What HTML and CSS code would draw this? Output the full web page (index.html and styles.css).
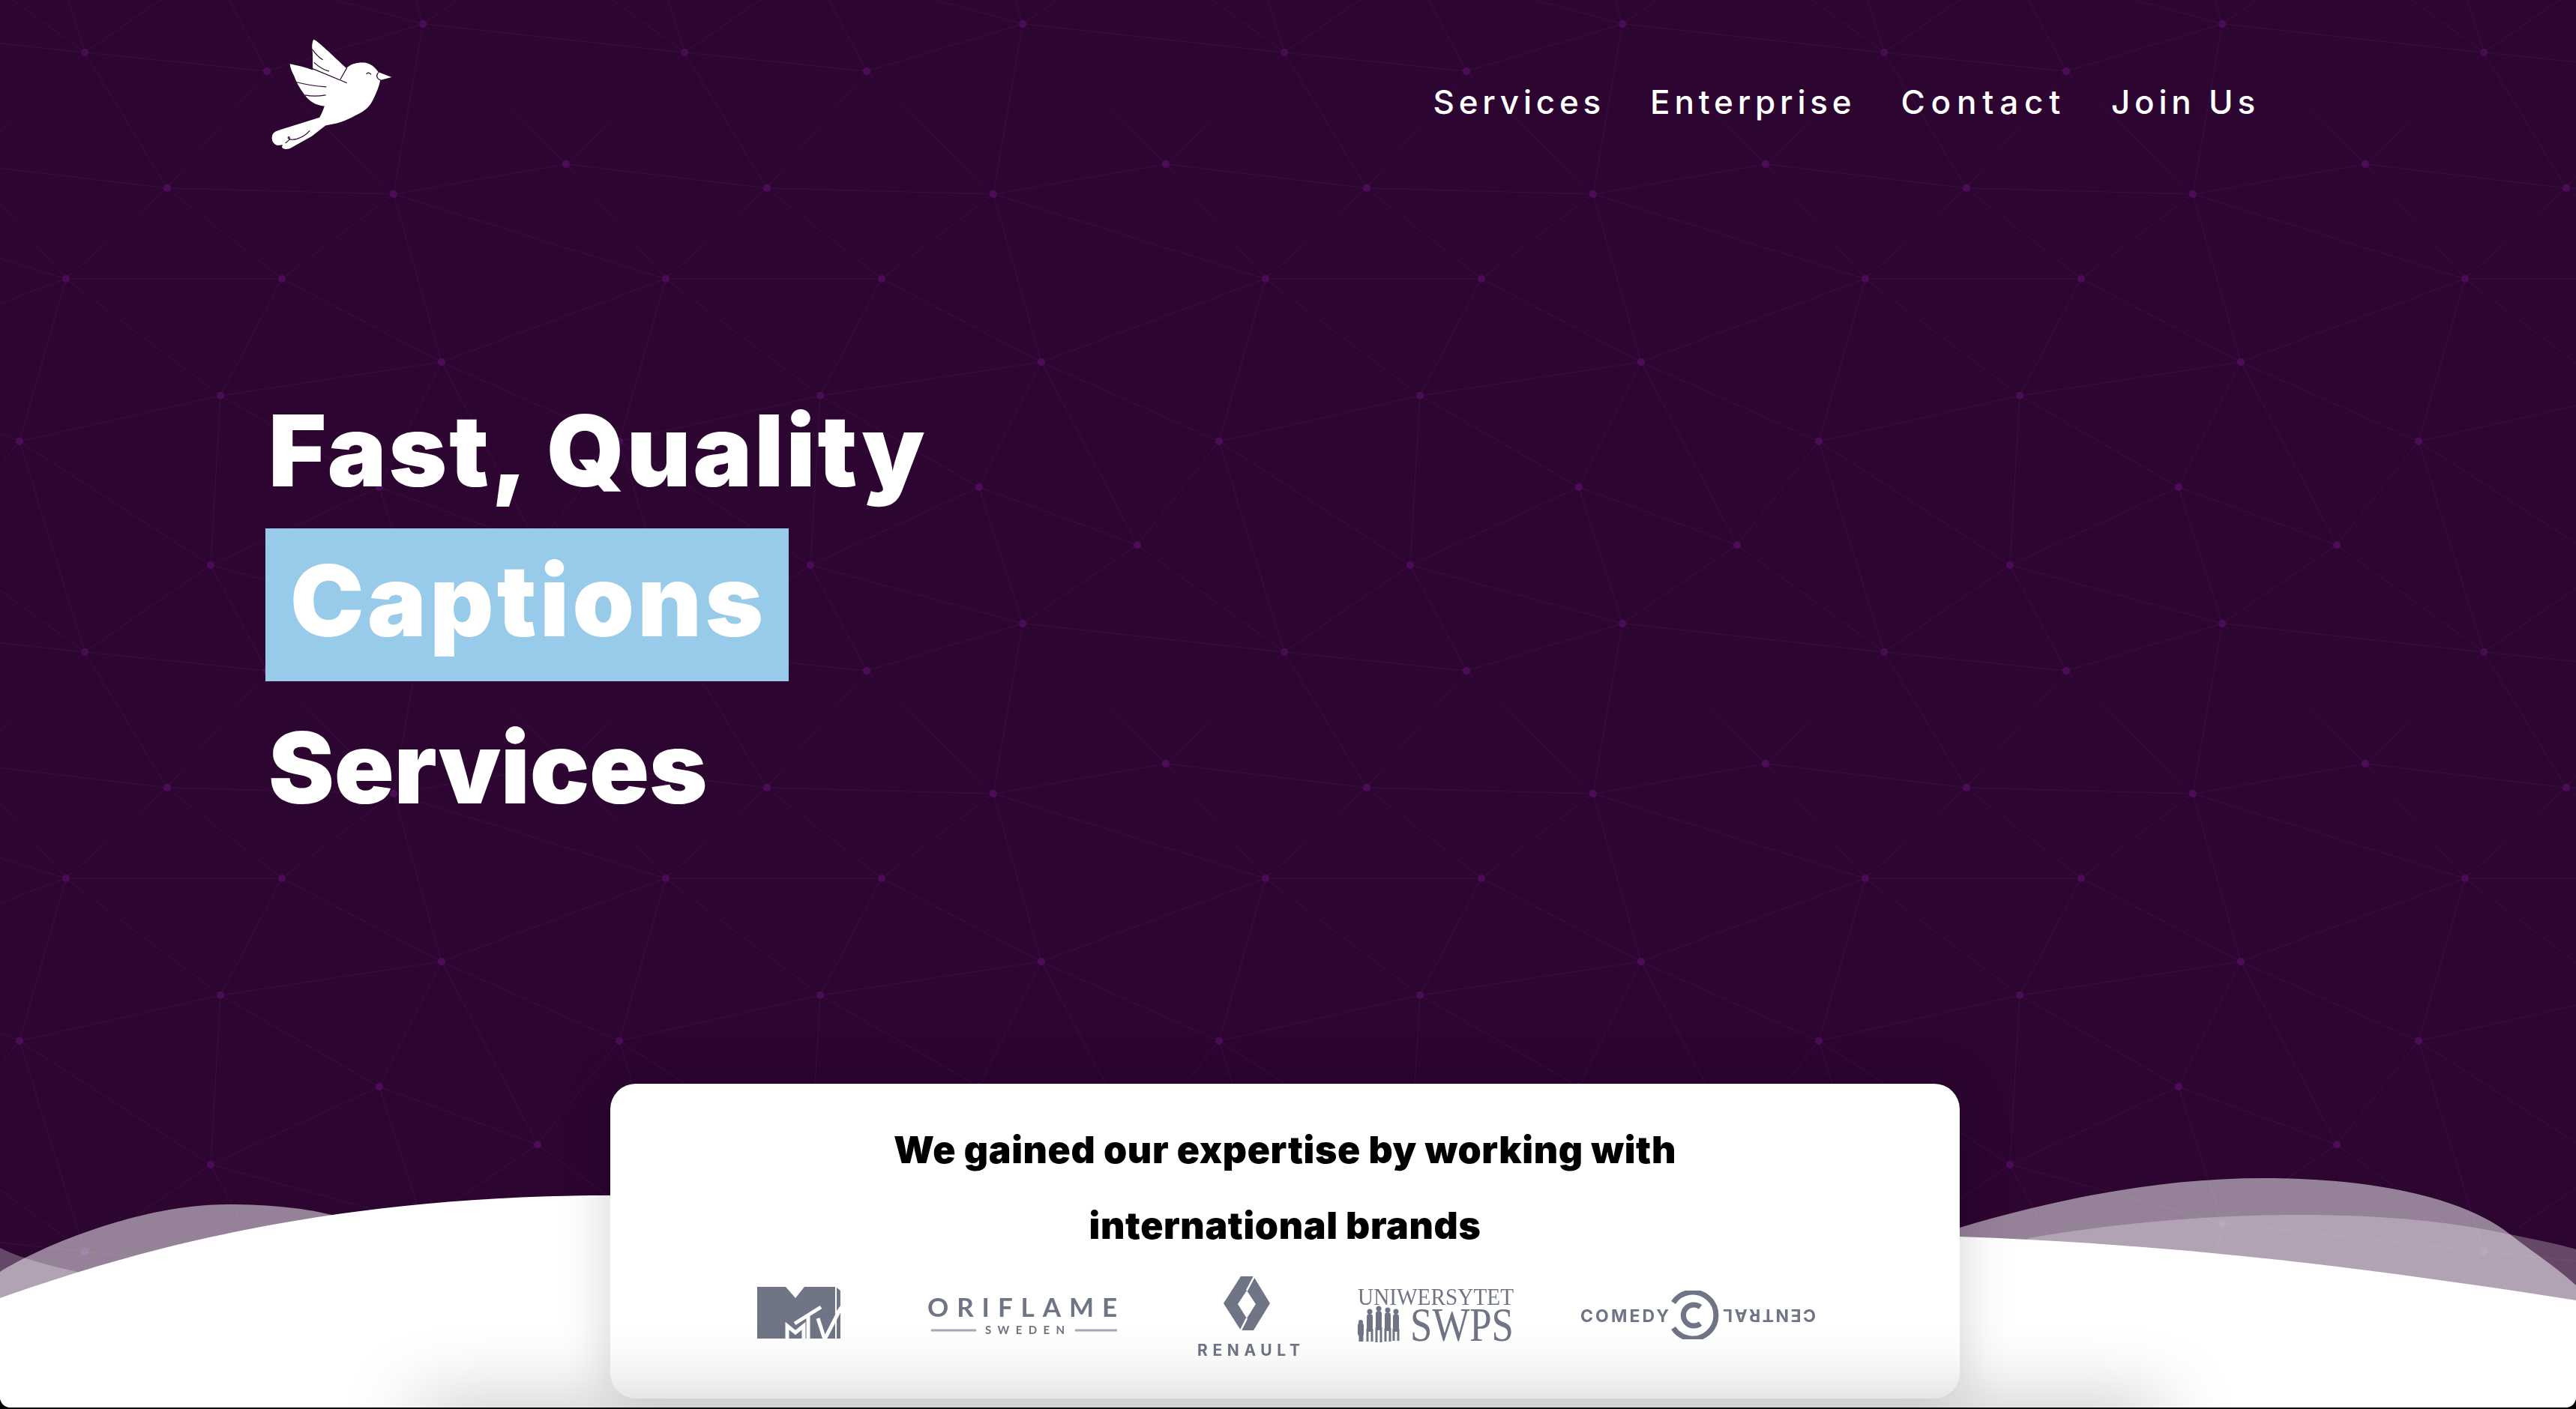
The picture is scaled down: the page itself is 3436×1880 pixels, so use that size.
FILE: index.html
```html
<!DOCTYPE html>
<html lang="en">
<head>
<meta charset="utf-8">
<title>Fast, Quality Captions Services</title>
<link rel="stylesheet" href="styles.css">
</head>
<body>
<div class="page">
  <svg class="net" aria-hidden="true">
    <defs>
      <g id="mesh">
        <path class="net-line" d="M88 372L376 372M88 372L294 528M88 372L26 589M88 372L223 251M376 372L294 528M376 372L589 483M376 372L223 251M376 372L525 259M294 528L589 483M294 528L26 589M294 528L506 650M294 528L281 754M589 483L506 650M589 483L717 727M589 483L525 259M26 589L281 754M506 650L717 727M506 650L281 754M356 95L564 32M356 95L525 259M356 95L113 70M356 95L223 251M564 32L525 259M564 32L755 219M525 259L755 219M525 259L223 251M113 70L223 251M589 483L888 372M589 483L826 589M717 727L826 589M717 727L913 870M564 32L913 70M281 754L564 832M506 650L564 832M717 727L564 832M281 754L113 870M281 754L356 895M755 219L913 70M755 219L1023 251M755 219L888 372M525 259L888 372M26 589L113 870"/>
        <g class="net-dot">
          <circle cx="88" cy="372" r="5"/><circle cx="376" cy="372" r="5"/><circle cx="294" cy="528" r="5"/>
          <circle cx="589" cy="483" r="5"/><circle cx="26" cy="589" r="5"/><circle cx="506" cy="650" r="5"/>
          <circle cx="717" cy="727" r="5"/><circle cx="281" cy="754" r="5"/><circle cx="356" cy="95" r="5"/>
          <circle cx="564" cy="32" r="5"/><circle cx="525" cy="259" r="5"/><circle cx="113" cy="70" r="5"/>
          <circle cx="755" cy="219" r="5"/><circle cx="223" cy="251" r="5"/>
        </g>
      </g>
      <pattern id="tile" width="800" height="800" patternUnits="userSpaceOnUse">
        <use href="#mesh"/>
        <use href="#mesh" x="-800"/>
        <use href="#mesh" y="-800"/>
        <use href="#mesh" x="-800" y="-800"/>
      </pattern>
    </defs>
    <rect width="100%" height="100%" fill="url(#tile)"/>
  </svg>

  <svg class="waves" viewBox="0 1500 3436 380" aria-hidden="true">
    <path class="wave-back" d="M0 1697C60 1660 190 1607 304 1607C360 1607 410 1612 450 1623L700 1720H2500C2530 1670 2580 1655 2614 1638C2760 1595 2890 1572 3019 1572C3170 1572 3290 1600 3348 1647C3385 1675 3415 1695 3436 1715V1880H0Z"/>
    <path class="wave-mid" d="M0 1665C30 1680 70 1690 113 1699L400 1760H2600L2706 1652C2820 1632 2950 1621 3067 1621C3180 1621 3270 1630 3348 1647C3380 1654 3415 1660 3436 1667V1880H0Z"/>
    <path class="wave-front" d="M0 1732C160 1676 420 1595 814 1595H1500C2000 1595 2300 1650 2614 1650C2900 1660 3150 1690 3436 1735V1880H0Z"/>
  </svg>

  <header class="topbar">
    <svg class="bird" viewBox="180 150 490 455" role="img" aria-label="Logo">
      <path class="bird-body" d="M352 157C372 165 400 195 484 272C500 255 530 248 555 250C580 252 600 270 612 288L665 308L620 320C615 345 605 370 590 400C575 430 555 445 520 462C480 485 440 497 400 502L345 545L262 592C250 598 235 600 225 590L228 580L208 582C190 578 182 560 186 545C188 530 200 525 215 520L376 470C385 455 390 440 396 424C370 422 345 412 325 390C305 365 285 335 275 305C265 285 258 270 257 255C290 262 320 268 350 280C347 260 350 240 348 210C345 190 345 170 352 157Z"/>
      <path class="bird-ink" d="M350 275L485 331M346 196C360 215 372 228 388 238M355 250C372 266 390 278 413 284M283 328C320 338 360 345 402 347M318 380C345 386 372 385 400 380M485 272L460 316M565 295Q572 285 582 297M612 290C602 298 604 314 620 320M240 572L252 562C262 556 254 542 250 550C248 560 270 560 285 556C305 550 322 540 336 524"/>
    </svg>
    <nav class="menu">
      <a class="menu-link" href="#">Services</a>
      <a class="menu-link" href="#">Enterprise</a>
      <a class="menu-link menu-link-wide" href="#">Contact</a>
      <a class="menu-link" href="#">Join Us</a>
    </nav>
  </header>

  <h1 class="headline">
    <span class="headline-line">Fast, Quality</span>
    <span class="headline-line headline-mark"><span class="mark">Captions</span></span>
    <span class="headline-line headline-last">Services</span>
  </h1>

  <section class="card">
    <h2 class="card-title">We gained our expertise by working with<br>international brands</h2>
    <div class="logos">
      <svg class="logo logo-mtv" viewBox="0 0 111 69" role="img" aria-label="MTV">
        <path class="logo-fill" d="M0 0H38L51 15L63 0H104V69H0ZM106 1L111 5V25L106 32ZM106 40L111 35V69H106Z"/>
        <path class="logo-cut" d="M50 49L85 27M68 38V69M81 42L90 70L108 35M40 69V52L51 61L62 52V69"/>
      </svg>
      <svg class="logo logo-ori" viewBox="0 -8 253 72" role="img" aria-label="Oriflame Sweden">
        <text class="logo-text ori-name" x="0" y="28" textLength="253">ORIFLAME</text>
        <path class="logo-rule" d="M5 46H65M197 46H253"/>
        <text class="logo-text ori-sub" x="77" y="51" textLength="106">SWEDEN</text>
      </svg>
      <svg class="logo logo-ren" viewBox="0 0 137 116" role="img" aria-label="Renault">
        <path class="logo-fill logo-even" d="M58 0H75L97 36L75 72H58L35 36ZM66 19L54 37L66 56L78 37Z"/>
        <path class="logo-slash" d="M76 0L66 19M66 56L58 72"/>
        <text class="logo-bold ren-name" x="0" y="106" textLength="137">RENAULT</text>
      </svg>
      <svg class="logo logo-swps" viewBox="0 -12 208 100" role="img" aria-label="Uniwersytet SWPS">
        <text class="logo-serif swps-top" x="0" y="22" textLength="208" lengthAdjust="spacingAndGlyphs">UNIWERSYTET</text>
        <text class="logo-serif swps-big" x="70" y="70" textLength="138" lengthAdjust="spacingAndGlyphs">SWPS</text>
        <g class="logo-fill">
          <circle cx="4" cy="45" r="3"/><path class="logo-person" d="M4 50V60"/><path class="logo-leg" d="M3 60V71M6 60V71"/>
          <circle cx="16" cy="31" r="3.5"/><path class="logo-person" d="M16 38V54"/><path class="logo-leg" d="M13 54V71M19 54V71"/>
          <circle cx="28" cy="27" r="3.5"/><path class="logo-person" d="M28 34V52"/><path class="logo-leg" d="M25 52V72M31 52V72"/>
          <circle cx="40" cy="29" r="3.5"/><path class="logo-person" d="M40 36V53"/><path class="logo-leg" d="M37 53V71M43 53V71"/>
          <circle cx="51" cy="31" r="3.5"/><path class="logo-person" d="M51 38V54"/><path class="logo-leg" d="M48 54V70M54 54V70"/>
        </g>
      </svg>
      <svg class="logo logo-cc" viewBox="0 0 314 65" role="img" aria-label="Comedy Central">
        <text class="logo-bold cc-name" x="0" y="42" textLength="118">COMEDY</text>
        <path class="logo-ring" d="M124 16A31 31 0 1 1 124 50"/>
        <path class="logo-ring logo-ring-in" d="M160 22A14 14 0 1 0 160 44"/>
        <text class="logo-bold cc-name" x="190" y="41" textLength="124" transform="rotate(180 252 33)">CENTRAL</text>
      </svg>
    </div>
  </section>

  <div class="floor-shadow"></div>
</div>
</body>
</html>
```
FILE: styles.css
```css
* { box-sizing: border-box; }
html, body { margin: 0; height: 100%; }
body { background: #000; overflow: hidden; font-family: "Inter", "Liberation Sans", sans-serif; }

.page {
  position: relative;
  width: 3436px;
  height: 1878px;
  background: #2c0530;
  border-radius: 0 0 14px 14px;
  overflow: hidden;
  display: flex;
  flex-direction: column;
  padding-left: 361px;
}

.net { position: absolute; inset: 0; width: 100%; height: 100%; }
.net-line { fill: none; stroke: #3a0b43; stroke-width: 1; }
.net-dot { fill: #4d0c5a; }

.waves { position: absolute; left: 0; top: 1500px; width: 3436px; height: 380px; }
.wave-back { fill: #fff; fill-opacity: .5; }
.wave-mid { fill: #fff; fill-opacity: .27; }
.wave-front { fill: #fff; }

.topbar {
  position: relative;
  display: flex;
  justify-content: space-between;
  align-items: flex-start;
  width: 2653px;
  padding-top: 50px;
}
.bird { display: block; width: 163px; height: 152px; }
.bird-body { fill: #fff; }
.bird-ink { fill: none; stroke: #2c0530; stroke-width: 3.5; stroke-linecap: round; }

.menu { display: flex; gap: 60px; padding-top: 56px; }
.menu-link {
  color: #fff;
  font-size: 44px;
  line-height: 60px;
  font-weight: 500;
  letter-spacing: 5.8px;
  text-decoration: none;
}
.menu-link-wide { letter-spacing: 7.8px; }

.headline {
  position: relative;
  margin: 297px 0 0 -7px;
  color: #fff;
  font-size: 132px;
  font-weight: 900;
  letter-spacing: 3px;
}
.headline-line { display: block; line-height: 204px; padding-left: 4px; }
.headline-mark { padding-left: 0; margin-top: -4px; letter-spacing: 4.4px; }
.headline-last { margin-top: 13px; letter-spacing: -.2px; }
.mark {
  display: inline-block;
  height: 204px;
  line-height: 192px;
  padding: 0 30px 0 33px;
  background: #98cbe9;
}

.card {
  position: absolute;
  left: 814px;
  top: 1446px;
  width: 1800px;
  height: 420px;
  border-radius: 34px;
  background: #fff;
  box-shadow: 0 0 70px rgba(0, 0, 0, .18);
  padding-top: 38px;
}
.card-title {
  margin: 0;
  color: #000;
  font-size: 50px;
  line-height: 101px;
  font-weight: 900;
  text-align: center;
  letter-spacing: .6px;
}
.logos { display: flex; align-items: flex-start; height: 115px; margin-top: 17px; padding-left: 196px; }
.logo { display: block; flex: none; filter: blur(.7px); }
.logo-mtv { width: 111px; height: 69px; margin-top: 14px; }
.logo-ori { width: 253px; height: 72px; margin: 18px 0 0 116px; }
.logo-ren { width: 137px; height: 116px; margin: 0 0 0 107px; }
.logo-swps { width: 208px; height: 100px; margin: 4px 0 0 77px; }
.logo-cc { width: 314px; height: 65px; margin: 19px 0 0 89px; }

.logo-fill { fill: #6f7585; }
.logo-even { fill-rule: evenodd; }
.logo-cut { fill: none; stroke: #fff; stroke-width: 5; }
.logo-slash { fill: none; stroke: #fff; stroke-width: 2.5; }
.logo-rule { fill: none; stroke: #a3a8b5; stroke-width: 3; }
.logo-ring { fill: none; stroke: #6f7585; stroke-width: 7; }
.logo-ring-in { stroke-width: 7; }
.logo-person { fill: none; stroke: #6f7585; stroke-width: 8; stroke-linecap: round; }
.logo-leg { fill: none; stroke: #6f7585; stroke-width: 3; }
.logo-text { fill: #6f7585; font-family: "Lato", "Liberation Sans", sans-serif; }
.logo-bold { fill: #6f7585; font-family: "Inter", "Liberation Sans", sans-serif; font-weight: 700; }
.logo-serif { fill: #6f7585; font-family: "Liberation Serif", serif; }
.ori-name { font-size: 35px; font-weight: 700; }
.ori-sub { font-size: 15px; font-weight: 700; }
.ren-name { font-size: 21px; }
.swps-top { font-size: 32px; }
.swps-big { font-size: 64px; }
.cc-name { font-size: 23px; }

.floor-shadow {
  position: absolute;
  left: 560px;
  top: 1885px;
  width: 2320px;
  height: 40px;
  border-radius: 20px;
  box-shadow: 0 0 100px 10px rgba(0, 0, 0, .28);
}
```
